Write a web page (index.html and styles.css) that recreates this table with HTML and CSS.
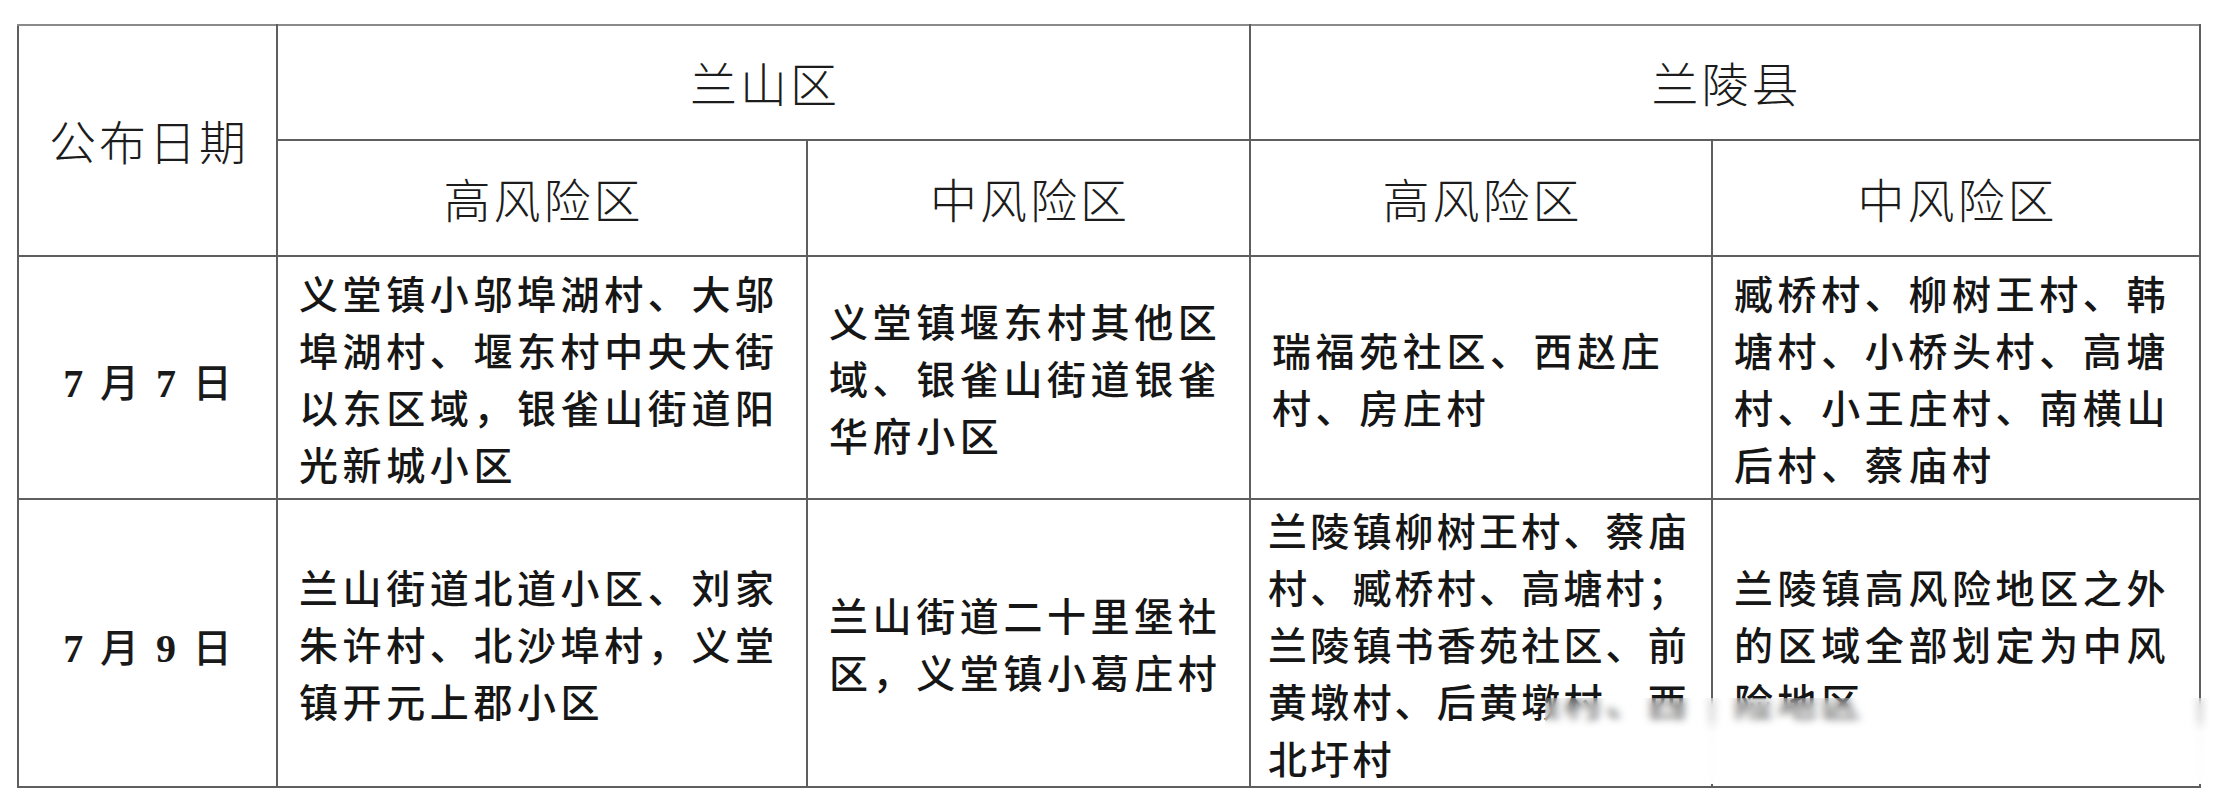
FILE: index.html
```html
<!DOCTYPE html>
<html lang="zh-CN">
<head>
<meta charset="utf-8">
<title>风险区公布</title>
<link rel="stylesheet" href="styles.css">
</head>
<body>
<div class="sheet">
  <table class="risk">
    <colgroup>
      <col class="c-date">
      <col class="c-lshigh">
      <col class="c-lsmid">
      <col class="c-llhigh">
      <col class="c-llmid">
    </colgroup>
    <thead>
      <tr class="h1">
        <th class="head" rowspan="2">公布日期</th>
        <th class="head" colspan="2">兰山区</th>
        <th class="head" colspan="2">兰陵县</th>
      </tr>
      <tr class="h2">
        <th class="head">高风险区</th>
        <th class="head">中风险区</th>
        <th class="head">高风险区</th>
        <th class="head">中风险区</th>
      </tr>
    </thead>
    <tbody>
      <tr class="r1">
        <td class="date"><span class="num">7</span> 月 <span class="num">7</span> 日</td>
        <td class="area">义堂镇小邬埠湖村、大邬<br>埠湖村、堰东村中央大街<br>以东区域，银雀山街道阳<br>光新城小区</td>
        <td class="area">义堂镇堰东村其他区<br>域、银雀山街道银雀<br>华府小区</td>
        <td class="area">瑞福苑社区、西赵庄<br>村、房庄村</td>
        <td class="area">臧桥村、柳树王村、韩<br>塘村、小桥头村、高塘<br>村、小王庄村、南横山<br>后村、蔡庙村</td>
      </tr>
      <tr class="r2">
        <td class="date"><span class="num">7</span> 月 <span class="num">9</span> 日</td>
        <td class="area">兰山街道北道小区、刘家<br>朱许村、北沙埠村，义堂<br>镇开元上郡小区</td>
        <td class="area">兰山街道二十里堡社<br>区，义堂镇小葛庄村</td>
        <td class="area tight">兰陵镇柳树王村、蔡庙<br>村、臧桥村、高塘村；<br>兰陵镇书香苑社区、前<br>黄墩村、后黄墩村、西<br>北圩村</td>
        <td class="area">兰陵镇高风险地区之外<br>的区域全部划定为中风<br>险地区</td>
      </tr>
    </tbody>
  </table>
  <div class="smudge"></div>
</div>
</body>
</html>
```

FILE: styles.css
```css
html, body {
  margin: 0;
  padding: 0;
  background: #ffffff;
}

body {
  font-family: "Noto Sans CJK SC", "Noto Sans", sans-serif;
  color: #1a1a1a;
}

.sheet {
  position: relative;
  width: 2182px;
  margin: 24px 0 0 17px;
}

.risk {
  border-collapse: collapse;
  table-layout: fixed;
  width: 2182px;
}

.c-date { width: 259px; }
.c-lshigh { width: 530px; }
.c-lsmid { width: 443px; }
.c-llhigh { width: 462px; }
.c-llmid { width: 488px; }

.risk th,
.risk td {
  border: 2px solid #5e5e5e;
  padding: 0;
}

.risk thead tr:first-child th {
  border-top-color: #8a8a8a;
}

.h1 { height: 115px; }
.h2 { height: 116px; }
.r1 { height: 243px; }
.r2 { height: 288px; }

.risk .head {
  font-size: 47px;
  font-weight: 300;
  letter-spacing: 3px;
  text-indent: 3px;
  line-height: 1.2;
  text-align: center;
  vertical-align: middle;
  color: #1c1c1c;
}

.risk .date {
  text-align: center;
  vertical-align: middle;
  font-size: 39px;
  font-weight: 500;
  letter-spacing: 4px;
  color: #1a1a1a;
  padding: 4px 0 0 4px;
}

.num {
  font-family: "Liberation Serif", serif;
  font-weight: 700;
  font-size: 40px;
}

.risk .area {
  font-size: 39px;
  font-weight: 500;
  letter-spacing: 4.6px;
  line-height: 57px;
  white-space: nowrap;
  text-align: left;
  vertical-align: middle;
  padding: 0 6px 0 21px;
  color: #161616;
}

.risk .area.tight {
  letter-spacing: 3.2px;
  padding-left: 17px;
}

.smudge {
  position: absolute;
  left: 1528px;
  top: 674px;
  width: 664px;
  height: 86px;
  backdrop-filter: blur(4px);
  -webkit-backdrop-filter: blur(4px);
  background: linear-gradient(to bottom,
    rgba(255, 255, 255, 0.15) 0px,
    rgba(255, 255, 255, 0.35) 20px,
    rgba(255, 255, 255, 0.93) 34px,
    rgba(255, 255, 255, 0.96) 100%);
}
```
